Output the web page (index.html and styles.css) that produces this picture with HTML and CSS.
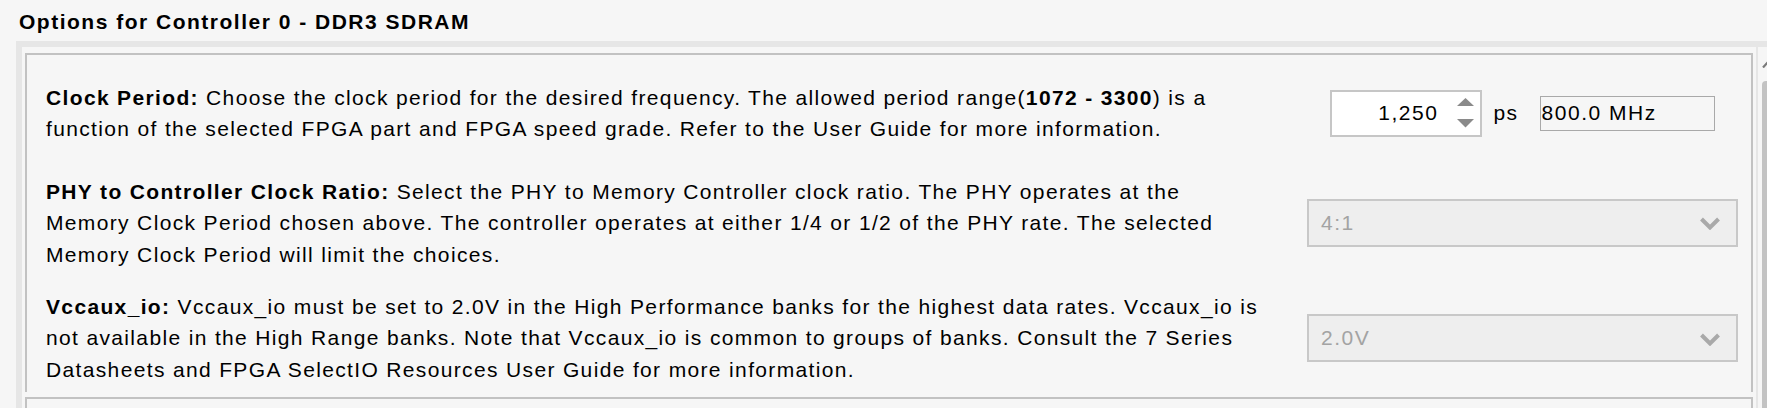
FILE: index.html
```html
<!DOCTYPE html>
<html>
<head>
<meta charset="utf-8">
<link rel="stylesheet" href="styles.css">
</head>
<body>
<h1 class="title">Options for Controller 0 - DDR3 SDRAM</h1>
<div class="scrollpane">
  <div class="viewport">
    <div class="panel">
      <div class="opt-row opt-row--first">
        <p class="desc"><b>Clock Period:</b> Choose the clock period for the desired frequency. The allowed period range(<b>1072 - 3300</b>) is a function of the selected FPGA part and FPGA speed grade. Refer to the User Guide for more information.</p>
        <div class="control">
          <div class="clock-group">
            <div class="spinner">
              <span class="spinner-value">1,250</span>
              <svg class="spinner-arrows" width="17" height="30" viewBox="0 0 17 30">
                <polygon points="0,8 8.5,0 17,8" fill="#8a8a8a"/>
                <polygon points="0,21 17,21 8.5,29.5" fill="#8a8a8a"/>
              </svg>
            </div>
            <span class="unit">ps</span>
            <div class="freq">800.0 MHz</div>
          </div>
        </div>
      </div>
      <div class="opt-row">
        <p class="desc"><b>PHY to Controller Clock Ratio:</b> Select the PHY to Memory Controller clock ratio. The PHY operates at the Memory Clock Period chosen above. The controller operates at either 1/4 or 1/2 of the PHY rate. The selected Memory Clock Period will limit the choices.</p>
        <div class="control">
          <div class="combo">
            <span class="combo-value">4:1</span>
            <svg class="chevron" width="20" height="13" viewBox="0 0 20 13">
              <polyline points="1.5,2 10,10.5 18.5,2" fill="none" stroke="#a9a9a9" stroke-width="4"/>
            </svg>
          </div>
        </div>
      </div>
      <div class="opt-row">
        <p class="desc"><b>Vccaux_io:</b> Vccaux_io must be set to 2.0V in the High Performance banks for the highest data rates. Vccaux_io is not available in the High Range banks. Note that Vccaux_io is common to groups of banks. Consult the 7 Series Datasheets and FPGA SelectIO Resources User Guide for more information.</p>
        <div class="control">
          <div class="combo">
            <span class="combo-value">2.0V</span>
            <svg class="chevron" width="20" height="13" viewBox="0 0 20 13">
              <polyline points="1.5,2 10,10.5 18.5,2" fill="none" stroke="#a9a9a9" stroke-width="4"/>
            </svg>
          </div>
        </div>
      </div>
    </div>
    <div class="panel panel--next"></div>
  </div>
  <div class="scrollbar">
    <svg class="scroll-arrow" width="12" height="8" viewBox="0 0 12 8">
      <polyline points="1,7.5 6.5,1.5 12,7.5" fill="none" stroke="#7a7a7a" stroke-width="2.2"/>
    </svg>
    <div class="thumb"></div>
  </div>
</div>
</body>
</html>
```

FILE: styles.css
```css
html, body {
  margin: 0;
  padding: 0;
}

body {
  width: 1767px;
  height: 408px;
  overflow: hidden;
  background: #f6f6f6;
  color: #000;
  font-family: "Liberation Sans", Arial, sans-serif;
  font-size: 21px;
  letter-spacing: 1.35px;
}

.title {
  margin: 0;
  padding: 10px 0 7px 19px;
  font-size: 21px;
  line-height: 24px;
  font-weight: bold;
  letter-spacing: 1.5px;
}

.scrollpane {
  margin-left: 16px;
  height: 367px;
  display: flex;
  border-top: 6px solid #e6e6e6;
  border-left: 6px solid #e6e6e6;
  box-sizing: border-box;
  overflow: hidden;
}

.viewport {
  flex: 1;
  padding: 6px 3px 0 3px;
  min-width: 0;
}

.panel {
  border: 2px solid #c2c2c2;
  border-bottom: none;
  padding: 27px 13px 7px 19px;
}

.panel--next {
  margin-top: 5px;
  height: 30px;
  padding: 0;
}

.opt-row {
  display: grid;
  grid-template-columns: 1fr 431px;
  column-gap: 43px;
  align-items: center;
  margin-bottom: 21px;
}

.opt-row:last-child {
  margin-bottom: 0;
}

.opt-row--first {
  margin-bottom: 31px;
}

.desc {
  margin: 0;
  line-height: 31.4px;
}

.control {
  display: flex;
  justify-content: center;
}

.clock-group {
  display: flex;
  align-items: center;
}

.spinner {
  width: 152px;
  height: 47px;
  box-sizing: border-box;
  border: 2px solid #c6c6c6;
  background: #fff;
  display: flex;
  align-items: center;
  padding-right: 6px;
  letter-spacing: 1.5px;
}

.spinner-value {
  flex: 1;
  text-align: right;
  margin-right: 19px;
}

.spinner-arrows {
  display: block;
}

.unit {
  margin-left: 11px;
  letter-spacing: 1.5px;
}

.freq {
  margin-left: 21px;
  width: 175px;
  height: 35px;
  box-sizing: border-box;
  border: 1px solid #a9a9a9;
  padding-left: 1px;
  display: flex;
  align-items: center;
  letter-spacing: 1.5px;
}

.combo {
  width: 431px;
  height: 48px;
  box-sizing: border-box;
  border: 2px solid #c8c8c8;
  background: #eeeeee;
  display: flex;
  align-items: center;
  justify-content: space-between;
  padding: 0 16px 0 12px;
  color: #a3a3a3;
  letter-spacing: 1.5px;
}

.chevron {
  display: block;
  margin-top: 2px;
}

.scrollbar {
  width: 11px;
  flex: none;
  border-left: 2px solid #e6e6e6;
  box-sizing: border-box;
  padding: 13px 0 0 4px;
  overflow: hidden;
}

.scroll-arrow {
  display: block;
}

.thumb {
  margin-top: 13px;
  width: 10px;
  height: 400px;
  background: #c3c3c3;
  border-radius: 4px 0 0 0;
}
```
